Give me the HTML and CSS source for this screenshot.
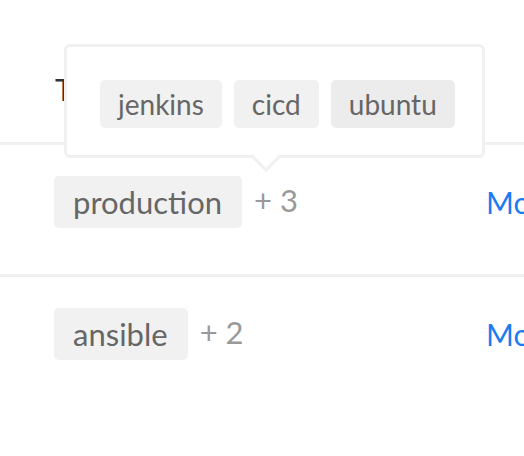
FILE: index.html
```html
<!DOCTYPE html>
<html>
<head>
<meta charset="utf-8">
<link rel="stylesheet" href="styles.css">
</head>
<body>
<div class="table">
  <div class="row head">
    <div class="cell tags-col"><span class="head-label">Tags</span></div>
    <div class="cell action-col"></div>
  </div>
  <div class="row">
    <div class="cell tags-col">
      <span class="tag">production</span>
      <span class="more-count">+ 3</span>
    </div>
    <div class="cell action-col"><a class="link">More</a></div>
  </div>
  <div class="row last">
    <div class="cell tags-col">
      <span class="tag">ansible</span>
      <span class="more-count">+ 2</span>
    </div>
    <div class="cell action-col"><a class="link">More</a></div>
  </div>
</div>
<div class="tooltip">
  <span class="tag small">jenkins</span>
  <span class="tag small">cicd</span>
  <span class="tag small hover">ubuntu</span>
</div>
</body>
</html>
```

FILE: styles.css
```css
html, body {
  margin: 0;
  padding: 0;
  background: #ffffff;
  font-family: "Lato", "Noto Sans", sans-serif;
  overflow: hidden;
}

.table {
  width: 640px;
}

.row {
  display: flex;
  border-bottom: 3px solid #f0f0f0;
  box-sizing: border-box;
}

.row.last {
  border-bottom: none;
}

.row.head {
  height: 145px;
  align-items: center;
}

.row:not(.head) {
  height: 132px;
  padding-top: 31px;
  align-items: flex-start;
}

.tags-col {
  width: 432px;
  padding-left: 54px;
  display: flex;
  align-items: center;
  gap: 12px;
}

.action-col {
  flex: 1;
  display: flex;
  align-items: center;
  height: 52px;
}

.head-label {
  font-size: 30px;
  color: #333333;
  padding-left: 1px;
  margin-top: 36px;
}

.tag {
  display: inline-flex;
  align-items: center;
  height: 52px;
  padding: 0 20px 0 19px;
  background: #f1f1f1;
  border-radius: 5px;
  color: #666666;
  font-size: 31px;
  box-sizing: border-box;
}

.more-count {
  font-size: 31px;
  color: #999999;
  margin-top: -4px;
}

.link {
  color: #1b7cf2;
  font-size: 30px;
}

.tooltip {
  position: absolute;
  left: 64px;
  top: 44px;
  width: 421px;
  height: 114px;
  box-sizing: border-box;
  background: #ffffff;
  border: 3px solid #f0f0f0;
  border-radius: 6px;
  padding: 33px 30px 27px 33px;
  display: flex;
  gap: 12px;
  align-items: flex-start;
}

.tooltip::after {
  content: "";
  position: absolute;
  left: 189px;
  top: 101px;
  width: 20px;
  height: 20px;
  box-sizing: border-box;
  background: #ffffff;
  border-right: 3px solid #f0f0f0;
  border-bottom: 3px solid #f0f0f0;
  transform: rotate(45deg);
}

.tag.small {
  height: 48px;
  padding: 0 18px;
  font-size: 28px;
}

.tag.hover {
  background: #ececec;
}
```
